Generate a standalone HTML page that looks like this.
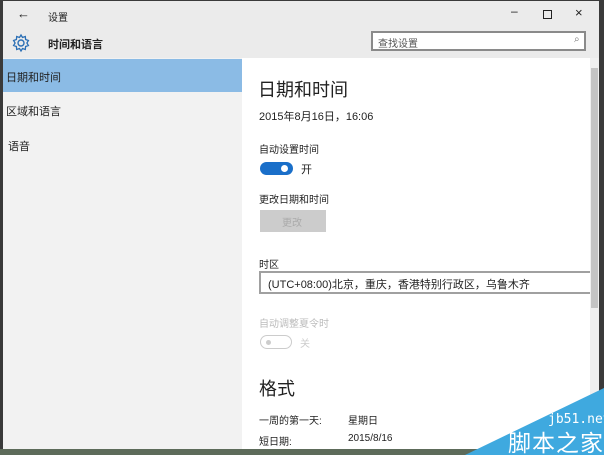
<!DOCTYPE html>
<html><head><meta charset="utf-8"><style>
body{margin:0;width:604px;height:455px;overflow:hidden;background:#fff;font-family:"Liberation Sans","Noto Sans CJK SC",sans-serif;position:relative;color:#222}
.a{position:absolute}
</style></head><body>
<div class="a" style="left:0;top:0;width:604px;height:455px;background:#3a3a3a"></div>
<div class="a" style="left:3px;top:1px;width:596px;height:448px;background:#f2f2f2"></div>
<div class="a" style="left:3px;top:1px;width:596px;height:57px;background:#ebebeb"></div>
<div class="a" style="left:17px;top:6px;font-size:13px">←</div>
<div class="a" style="left:48px;top:9px;font-size:10px">设置</div>
<div class="a" style="left:511px;top:4px;font-size:12px">–</div>
<div class="a" style="left:543px;top:10px;width:7px;height:7px;border:1px solid #222"></div>
<div class="a" style="left:575px;top:5px;font-size:13px">×</div>
<svg class="a" style="left:11px;top:33px" width="20" height="20" viewBox="0 0 20 20"><circle cx="10" cy="10" r="3" fill="none" stroke="#2b6fb5" stroke-width="1.4"/><path d="M10 2l1.5 2.5 2.8-1 .3 3 2.8 1-1.5 2.5 1.5 2.5-2.8 1-.3 3-2.8-1L10 18l-1.5-2.5-2.8 1-.3-3-2.8-1L4.1 10 2.6 7.5l2.8-1 .3-3 2.8 1z" fill="none" stroke="#2b6fb5" stroke-width="1.3"/></svg>
<div class="a" style="left:48px;top:36px;font-size:11px;font-weight:bold">时间和语言</div>
<div class="a" style="left:371px;top:31px;width:215px;height:20px;border:2px solid #8a8a8a;background:#fff;box-sizing:border-box"></div>
<div class="a" style="left:378px;top:35px;font-size:10px;color:#555">查找设置</div>
<div class="a" style="left:574px;top:34px;font-size:10px;color:#777">⌕</div>
<div class="a" style="left:3px;top:59px;width:239px;height:33px;background:#8bbbe5"></div>
<div class="a" style="left:6px;top:69px;font-size:11px">日期和时间</div>
<div class="a" style="left:6px;top:103px;font-size:11px">区域和语言</div>
<div class="a" style="left:8px;top:138px;font-size:11px">语音</div>
<div class="a" style="left:242px;top:58px;width:348px;height:391px;background:#fff"></div>
<div class="a" style="left:590px;top:58px;width:9px;height:391px;background:#f0f0f0"></div>
<div class="a" style="left:591px;top:68px;width:7px;height:240px;background:#c4c4c4"></div>
<div class="a" style="left:258px;top:76px;font-size:18px">日期和时间</div>
<div class="a" style="left:259px;top:108px;font-size:11px">2015年8月16日，16:06</div>
<div class="a" style="left:259px;top:141px;font-size:10px">自动设置时间</div>
<div class="a" style="left:260px;top:162px;width:33px;height:13px;border-radius:7px;background:#1a6fc9"></div>
<div class="a" style="left:281px;top:165px;width:7px;height:7px;border-radius:50%;background:#fff"></div>
<div class="a" style="left:301px;top:161px;font-size:11px">开</div>
<div class="a" style="left:259px;top:191px;font-size:10px">更改日期和时间</div>
<div class="a" style="left:260px;top:210px;width:66px;height:22px;background:#ccc"></div>
<div class="a" style="left:282px;top:214px;font-size:10px;color:#aaa">更改</div>
<div class="a" style="left:259px;top:256px;font-size:10px">时区</div>
<div class="a" style="left:259px;top:271px;width:331px;height:23px;border:2px solid #a0a0a0;border-right:none;box-sizing:border-box"></div>
<div class="a" style="left:268px;top:276px;font-size:11px">(UTC+08:00)北京，重庆，香港特别行政区，乌鲁木齐</div>
<div class="a" style="left:259px;top:315px;font-size:10px;color:#bbb">自动调整夏令时</div>
<div class="a" style="left:260px;top:335px;width:30px;height:12px;border:1.5px solid #ccc;border-radius:7px"></div>
<div class="a" style="left:266px;top:340px;width:5px;height:5px;border-radius:50%;background:#ccc"></div>
<div class="a" style="left:300px;top:335px;font-size:10px;color:#ccc">关</div>
<div class="a" style="left:259px;top:375px;font-size:18px">格式</div>
<div class="a" style="left:259px;top:412px;font-size:10px">一周的第一天:</div>
<div class="a" style="left:348px;top:412px;font-size:10px">星期日</div>
<div class="a" style="left:259px;top:433px;font-size:10px">短日期:</div>
<div class="a" style="left:348px;top:433px;font-size:10px">2015/8/16</div>
<div class="a" style="left:0;top:449px;width:604px;height:6px;background:#5d6b5a"></div>
<svg class="a" style="left:0;top:0" width="604" height="455"><polygon points="465,455 604,388 604,455" fill="#3fa9df"/></svg>
<div class="a" style="left:548px;top:412px;font-size:13px;color:#fff;font-family:'DejaVu Sans Mono',monospace">jb51.net</div>
<div class="a" style="left:508px;top:424px;font-size:23px;color:#fff;letter-spacing:1px">脚本之家</div>
</body></html>
